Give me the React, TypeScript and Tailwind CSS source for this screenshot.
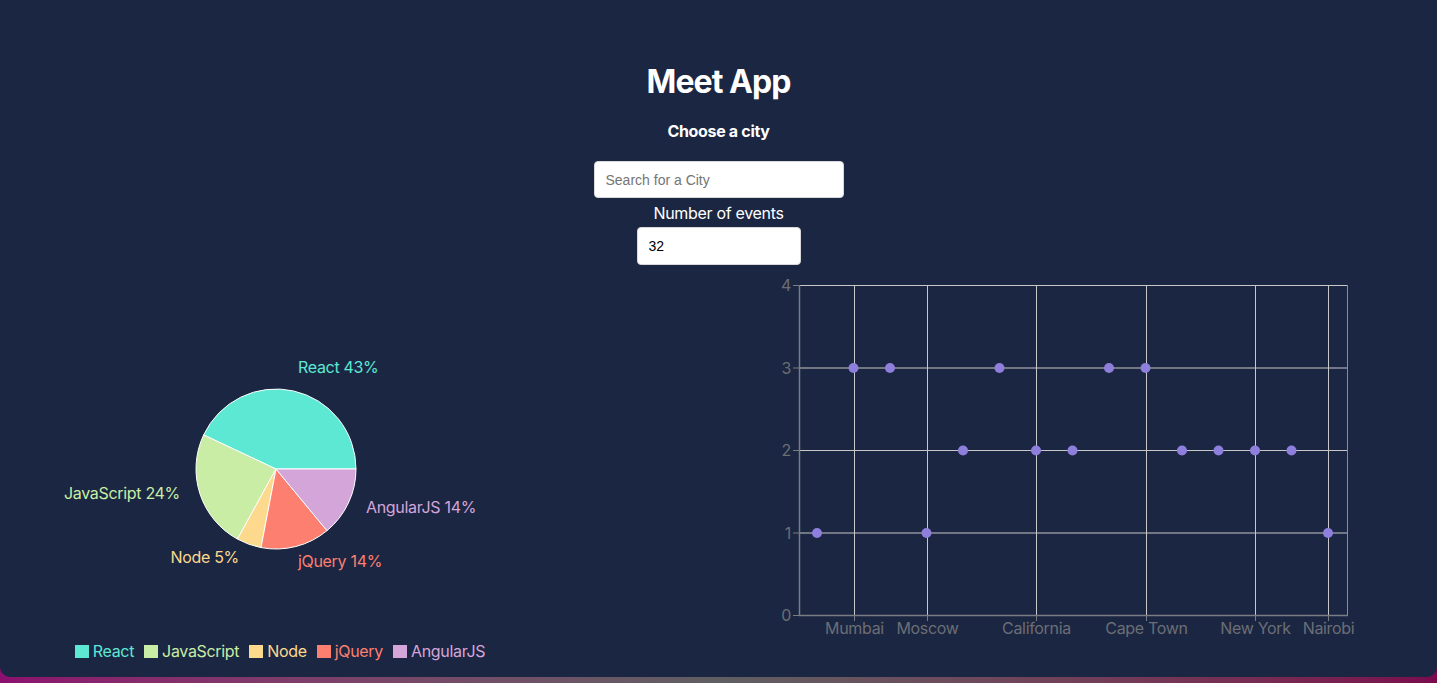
import React from 'react';

type Slice = { name: string; value: number; color: string };

const slices: Slice[] = [
  { name: 'React', value: 43, color: '#5de8d4' },
  { name: 'JavaScript', value: 24, color: '#c9eda5' },
  { name: 'Node', value: 5, color: '#fdd98d' },
  { name: 'jQuery', value: 14, color: '#fd7f6f' },
  { name: 'AngularJS', value: 14, color: '#d4a5d9' },
];

// label spots measured off the design
const labels = [
  { x: 298, y: 367, anchor: 'start' },
  { x: 180, y: 493, anchor: 'end' },
  { x: 239, y: 557, anchor: 'end' },
  { x: 298, y: 561, anchor: 'start' },
  { x: 366, y: 507, anchor: 'start' },
];

const points = [1, 3, 3, 1, 2, 3, 2, 2, 3, 3, 2, 2, 2, 2, 1];
const cityTicks: Record<number, string> = {
  1: 'Mumbai',
  3: 'Moscow',
  6: 'California',
  9: 'Cape Town',
  12: 'New York',
  14: 'Nairobi',
};

const PieChart: React.FC = () => {
  const cx = 276;
  const cy = 469;
  const r = 80;
  let start = 0;

  const arcs = slices.map((s, i) => {
    const end = start + (s.value / 100) * Math.PI * 2;
    const x1 = cx + r * Math.cos(start);
    const y1 = cy - r * Math.sin(start);
    const x2 = cx + r * Math.cos(end);
    const y2 = cy - r * Math.sin(end);
    const large = end - start > Math.PI ? 1 : 0;
    const d = `M${cx},${cy} L${x1},${y1} A${r},${r} 0 ${large} 0 ${x2},${y2} Z`;
    start = end;
    return <path key={i} d={d} fill={s.color} stroke="#fff" strokeWidth={1} />;
  });

  return (
    <div className="w-[560px] flex flex-col">
      <svg width={560} height={362} viewBox="0 275 560 362">
        {arcs}
        {slices.map((s, i) => (
          <text
            key={s.name}
            x={labels[i].x}
            y={labels[i].y}
            fill={s.color}
            fontSize={16}
            letterSpacing="-0.32"
            textAnchor={labels[i].anchor as 'start' | 'end'}
            dominantBaseline="central"
            fontFamily="Inter, sans-serif"
          >
            {s.name} {s.value}%
          </text>
        ))}
      </svg>
      <div className="h-[28px] flex items-center justify-center gap-[10px] font-['Inter',sans-serif] text-[16px] tracking-[-0.02em]">
        {slices.map(s => (
          <div key={s.name} className="flex items-center gap-[4px]">
            <span className="w-[14px] h-[13px] inline-block" style={{ backgroundColor: s.color }} />
            <span style={{ color: s.color }}>{s.name}</span>
          </div>
        ))}
      </div>
    </div>
  );
};

const ScatterChart: React.FC = () => {
  const left = 799;
  const right = 1347;
  const top = 285;
  const bottom = 615;
  const step = 36.5;
  const xAt = (i: number) => 817 + i * step;
  const yAt = (v: number) => bottom - v * ((bottom - top) / 4);

  return (
    <svg width={620} height={400} viewBox="760 275 620 400" className="font-['Inter',sans-serif]" letterSpacing="-0.32">
      {/* grid */}
      {[1, 2, 3, 4].map(v => (
        <line key={v} x1={left} x2={right} y1={yAt(v) + 0.5} y2={yAt(v) + 0.5} stroke="#c8c8c8" strokeWidth={1} />
      ))}
      {Object.keys(cityTicks).map(k => {
        const x = Math.round(xAt(Number(k))) + 0.5;
        return <line key={k} x1={x} x2={x} y1={top} y2={bottom} stroke="#c8c8c8" strokeWidth={1} />;
      })}
      <line x1={right + 0.5} x2={right + 0.5} y1={top} y2={bottom} stroke="#8a8d94" strokeWidth={1} />

      {/* axes */}
      <line x1={left + 0.5} x2={left + 0.5} y1={top} y2={bottom + 0.5} stroke="#7a7d84" strokeWidth={1.5} />
      <line x1={left} x2={right + 1} y1={bottom + 0.5} y2={bottom + 0.5} stroke="#7a7d84" strokeWidth={1.5} />

      {[0, 1, 2, 3, 4].map(v => (
        <g key={v}>
          <line x1={left - 6} x2={left} y1={yAt(v) + 0.5} y2={yAt(v) + 0.5} stroke="#7a7d84" />
          <text x={791} y={yAt(v)} fill="#6b6e75" fontSize={16} textAnchor="end" dominantBaseline="central">
            {v}
          </text>
        </g>
      ))}

      {Object.entries(cityTicks).map(([k, name]) => {
        const x = Math.round(xAt(Number(k))) + 0.5;
        return (
          <g key={k}>
            <line x1={x} x2={x} y1={bottom} y2={bottom + 6} stroke="#7a7d84" />
            <text x={x} y={628} fill="#6b6e75" fontSize={16} textAnchor="middle" dominantBaseline="central">
              {name}
            </text>
          </g>
        );
      })}

      {points.map((v, i) => (
        <circle key={i} cx={xAt(i)} cy={yAt(v) + 0.5} r={5} fill="#8e7fdc" />
      ))}
    </svg>
  );
};

export default function App() {
  return (
    <div className="w-[1437px] h-[683px] overflow-hidden bg-gradient-to-r from-[#8c0f6e] via-[#5f5f63] to-[#7a0a4e]">
      <div className="h-[677px] bg-[#1b2642] rounded-b-[10px] flex flex-col items-center pt-[63px] font-['Inter',sans-serif] text-white tracking-[-0.02em]">
        <h1 className="text-[32px] leading-[38px] font-bold tracking-[-0.03em]">Meet App</h1>
        <h3 className="mt-[20px] text-[16px] leading-[20px] font-bold">Choose a city</h3>
        <input
          type="text"
          placeholder="Search for a City"
          className="mt-[20px] w-[250px] h-[37px] bg-white rounded-[4px] border border-[#d8d8d8] px-[11px] text-[14px] tracking-normal text-black placeholder:text-[#757575] font-['Liberation_Sans',Arial,sans-serif] outline-none"
        />
        <label className="mt-[5px] text-[16px] leading-[20px]">Number of events</label>
        <input
          type="number"
          defaultValue={32}
          className="mt-[4px] w-[164px] h-[38px] bg-white rounded-[4px] border border-[#d8d8d8] px-[11px] text-[14px] tracking-normal text-black font-['Liberation_Sans',Arial,sans-serif] outline-none [appearance:textfield]"
        />
        <div className="mt-[10px] w-full flex">
          <PieChart />
          <div className="ml-[200px]">
            <ScatterChart />
          </div>
        </div>
      </div>
    </div>
  );
}
